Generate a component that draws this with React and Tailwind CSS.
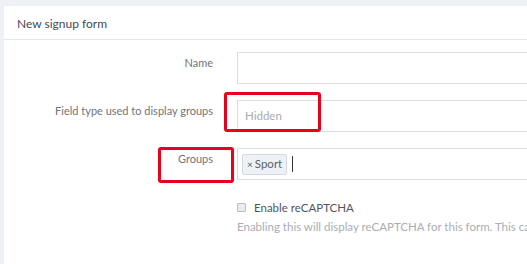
const labelCls = 'w-[209px] shrink-0 pt-[3px] text-right text-[11px] text-[#6f747a]'
const inputCls = 'h-[32px] flex-1 border border-[#d9dee4] bg-white'

export default function App() {
  return (
    <div className="h-[264px] w-[527px] overflow-hidden bg-[#edf0f4] pl-[4px] pt-[6px] font-['Lato','Liberation_Sans',sans-serif]">
      <div className="h-[300px] w-[560px] bg-white">
        <div className="flex h-[34px] items-center border-b border-[#e4e8ec] px-[13px] pt-[3px] text-[12px] text-[#444a52]">
          New signup form
        </div>

        <div className="flex flex-col gap-[16px] pt-[12px]">
          <div className="flex gap-[24px]">
            <div className={labelCls}>Name</div>
            <div className={inputCls} />
          </div>

          <div className="flex gap-[24px]">
            <div className={labelCls}>Field type used to display groups</div>
            <div className={`${inputCls} relative flex items-center pl-[7px] text-[11.5px] text-[#a7abb0]`}>
              Hidden
              <span className="absolute -left-[14px] -top-[9px] h-[40px] w-[97px] rounded-[3px] border-[3px] border-[#e8001c]" />
            </div>
          </div>

          <div className="flex gap-[24px]">
            <div className={`${labelCls} relative`}>
              Groups
              <span className="absolute left-[154px] -top-[1px] h-[36px] w-[76px] rounded-[3px] border-[3px] border-[#e8001c]" />
            </div>
            <div className={`${inputCls} flex items-center gap-[5px] pl-[4px]`}>
              <span className="flex h-[21px] items-center rounded-[2px] border border-[#d3d9e1] bg-[#eef1f6] px-[4px] text-[11.5px] text-[#5d636a]">
                <span className="mr-[2px] text-[10px]">×</span>Sport
              </span>
              <span className="h-[16px] w-px bg-[#333]" />
            </div>
          </div>

          <div className="ml-[233px] mt-[3px] flex flex-col gap-[2px]">
            <label className="flex items-center gap-[8px] text-[11.5px] text-[#50565d]">
              <span className="h-[9px] w-[9px] rounded-[1px] border border-[#b9bec4] bg-[#e9ebee]" />
              Enable reCAPTCHA
            </label>
            <div className="whitespace-nowrap text-[11.5px] text-[#a9adb2]">
              Enabling this will display reCAPTCHA for this form. This can
            </div>
          </div>
        </div>
      </div>
    </div>
  )
}
